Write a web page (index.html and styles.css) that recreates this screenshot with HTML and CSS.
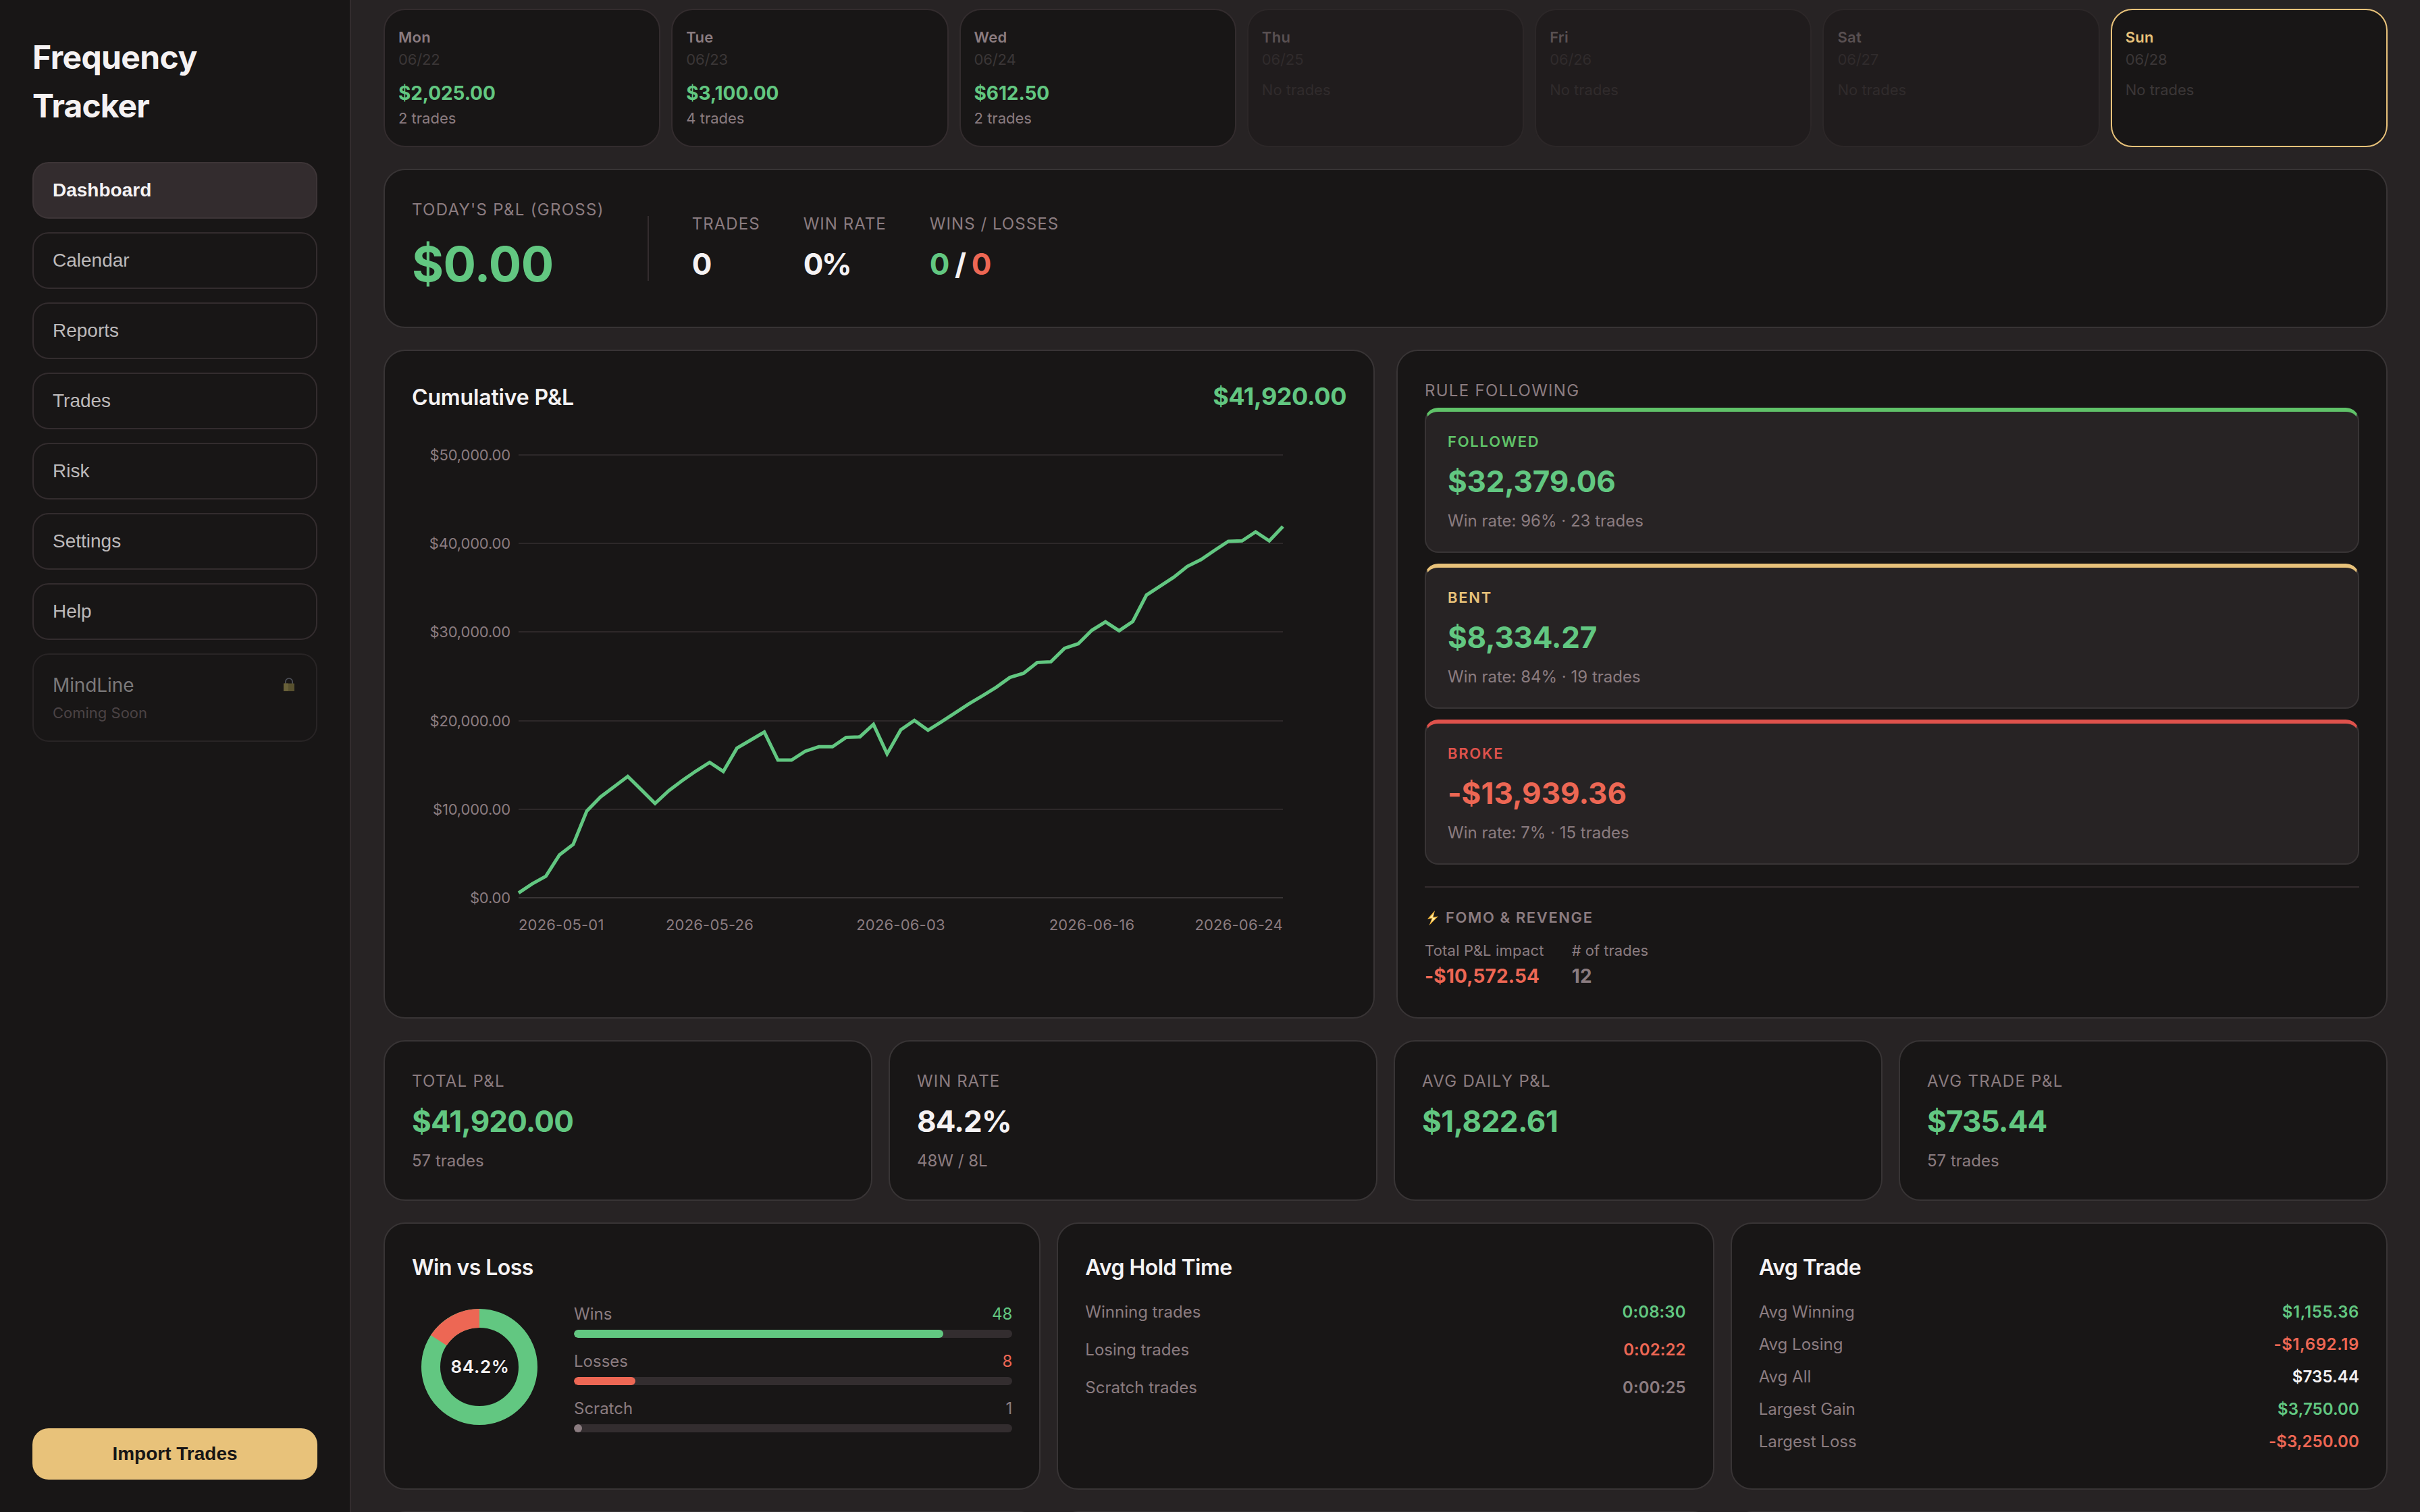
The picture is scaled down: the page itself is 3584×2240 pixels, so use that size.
FILE: index.html
```html
<!DOCTYPE html>
<html lang="en">
<head>
<meta charset="utf-8">
<title>Frequency Tracker</title>
<link rel="stylesheet" href="styles.css">
</head>
<body>
<div class="app">
  <aside class="sidebar">
    <h1 class="brand">Frequency <span class="brand-second">Tracker</span></h1>
    <nav class="nav">
      <a class="nav-item active">Dashboard</a>
      <a class="nav-item">Calendar</a>
      <a class="nav-item">Reports</a>
      <a class="nav-item">Trades</a>
      <a class="nav-item">Risk</a>
      <a class="nav-item">Settings</a>
      <a class="nav-item">Help</a>
      <div class="nav-locked">
        <div class="locked-row">
          <span class="locked-name">MindLine</span>
          <svg class="lock" viewBox="0 0 24 24"><path d="M6.8 10.4V7.2a5.2 5.2 0 0 1 10.4 0v3.2" fill="none" stroke="#50535c" stroke-width="1.7"/><rect x="4" y="9.4" width="16" height="11.6" rx=".6" fill="#58512f"/><rect x="4" y="9.4" width="7" height="11.6" rx=".6" fill="#686039"/></svg>
        </div>
        <div class="locked-note">Coming Soon</div>
      </div>
    </nav>
    <button class="import">Import Trades</button>
  </aside>

  <main class="main">
    <section class="week">
      <div class="day"><div class="day-name">Mon</div><div class="day-date">06/22</div><div class="day-pnl">$2,025.00</div><div class="day-count">2 trades</div></div>
      <div class="day"><div class="day-name">Tue</div><div class="day-date">06/23</div><div class="day-pnl">$3,100.00</div><div class="day-count">4 trades</div></div>
      <div class="day"><div class="day-name">Wed</div><div class="day-date">06/24</div><div class="day-pnl">$612.50</div><div class="day-count">2 trades</div></div>
      <div class="day idle"><div class="day-name">Thu</div><div class="day-date">06/25</div><div class="day-none">No trades</div></div>
      <div class="day idle"><div class="day-name">Fri</div><div class="day-date">06/26</div><div class="day-none">No trades</div></div>
      <div class="day idle"><div class="day-name">Sat</div><div class="day-date">06/27</div><div class="day-none">No trades</div></div>
      <div class="day today"><div class="day-name">Sun</div><div class="day-date">06/28</div><div class="day-none">No trades</div></div>
    </section>

    <section class="card summary">
      <div class="summary-main">
        <div class="label">TODAY'S P&amp;L (GROSS)</div>
        <div class="summary-pnl">$0.00</div>
      </div>
      <div class="divider"></div>
      <div class="summary-stat"><div class="label tight">TRADES</div><div class="value white">0</div></div>
      <div class="summary-stat"><div class="label tight">WIN RATE</div><div class="value white percent">0%</div></div>
      <div class="summary-stat"><div class="label tight">WINS / LOSSES</div><div class="value white ratio"><span class="green">0</span> / <span class="red">0</span></div></div>
    </section>

    <section class="halves">
      <div class="card">
        <div class="chart-head"><h2 class="card-title wide">Cumulative P&amp;L</h2><span class="chart-total">$41,920.00</span></div>
        <svg class="chart" viewBox="0 0 1384 853">
          <g class="grid">
            <path d="M158 60H1290M158 191H1290M158 322H1290M158 454H1290M158 585H1290"/>
            <path class="axis" d="M158 716H1290"/>
          </g>
          <g class="tick tick-y">
            <text x="146" y="68">$50,000.00</text>
            <text x="146" y="199">$40,000.00</text>
            <text x="146" y="330">$30,000.00</text>
            <text x="146" y="462">$20,000.00</text>
            <text x="146" y="593">$10,000.00</text>
            <text x="146" y="724">$0.00</text>
          </g>
          <g class="tick tick-x">
            <text class="first" x="158" y="764">2026-05-01</text>
            <text x="441" y="764">2026-05-26</text>
            <text x="724" y="764">2026-06-03</text>
            <text x="1007" y="764">2026-06-16</text>
            <text class="last" x="1290" y="764">2026-06-24</text>
          </g>
          <polyline class="line" points=""/>
        </svg>
      </div>

      <div class="card">
        <div class="label">RULE FOLLOWING</div>
        <div class="rules">
          <div class="rule followed"><div class="rule-name">FOLLOWED</div><div class="value rule-value green">$32,379.06</div><div class="sub">Win rate: 96% · 23 trades</div></div>
          <div class="rule bent"><div class="rule-name">BENT</div><div class="value rule-value green">$8,334.27</div><div class="sub">Win rate: 84% · 19 trades</div></div>
          <div class="rule broke"><div class="rule-name">BROKE</div><div class="value rule-value red">-$13,939.36</div><div class="sub">Win rate: 7% · 15 trades</div></div>
        </div>
        <div class="fomo">
          <div class="fomo-title"><svg class="bolt" viewBox="0 0 24 24"><path d="M15 1 4 13.6l6.6-1.2L6.6 23 20 9.6l-7.4 1.2z" fill="#f5b73c"/><path d="M13.4 5 7.4 12l5-.8-3 7.4 6.8-7.2-5.4.8z" fill="#fff3b0"/></svg>FOMO &amp; REVENGE</div>
          <div class="fomo-stats">
            <div><div class="fomo-label impact">Total P&amp;L impact</div><div class="fomo-value red">-$10,572.54</div></div>
            <div><div class="fomo-label"># of trades</div><div class="fomo-value">12</div></div>
          </div>
        </div>
      </div>
    </section>

    <section class="quarters">
      <div class="card"><div class="label">TOTAL P&amp;L</div><div class="value green">$41,920.00</div><div class="sub">57 trades</div></div>
      <div class="card"><div class="label tight">WIN RATE</div><div class="value white">84.2%</div><div class="sub">48W / 8L</div></div>
      <div class="card"><div class="label">AVG DAILY P&amp;L</div><div class="value green daily">$1,822.61</div></div>
      <div class="card"><div class="label">AVG TRADE P&amp;L</div><div class="value green">$735.44</div><div class="sub">57 trades</div></div>
    </section>

    <section class="thirds">
      <div class="card">
        <h2 class="card-title">Win vs Loss</h2>
        <div class="winloss">
          <svg class="donut" viewBox="0 0 200 200">
            <circle class="donut-win" cx="100" cy="100" r="72"/>
            <circle class="donut-loss" cx="100" cy="100" r="72" pathLength="100" stroke-dasharray="15.8 84.2" stroke-dashoffset="-84.2" transform="rotate(-90 100 100)"/>
            <text class="donut-text" x="101" y="109">84.2%</text>
          </svg>
          <div class="bars">
            <div><div class="bar-head"><span>Wins</span><span class="green">48</span></div><div class="track"><div class="fill fill-win" style="width:84.2%"></div></div></div>
            <div><div class="bar-head"><span>Losses</span><span class="red">8</span></div><div class="track"><div class="fill fill-loss" style="width:14%"></div></div></div>
            <div><div class="bar-head"><span>Scratch</span><span>1</span></div><div class="track"><div class="fill fill-scratch" style="width:1.8%"></div></div></div>
          </div>
        </div>
      </div>
      <div class="card">
        <h2 class="card-title">Avg Hold Time</h2>
        <div class="rows loose">
          <div class="row"><span>Winning trades</span><b class="green">0:08:30</b></div>
          <div class="row"><span>Losing trades</span><b class="red">0:02:22</b></div>
          <div class="row"><span>Scratch trades</span><b>0:00:25</b></div>
        </div>
      </div>
      <div class="card">
        <h2 class="card-title">Avg Trade</h2>
        <div class="rows">
          <div class="row"><span>Avg Winning</span><b class="green ones">$1,155.36</b></div>
          <div class="row"><span>Avg Losing</span><b class="red ones">-$1,692.19</b></div>
          <div class="row"><span>Avg All</span><b class="white">$735.44</b></div>
          <div class="row"><span>Largest Gain</span><b class="green">$3,750.00</b></div>
          <div class="row"><span>Largest Loss</span><b class="red">-$3,250.00</b></div>
        </div>
      </div>
    </section>

    <section class="thirds">
      <div class="card"></div>
      <div class="card"></div>
      <div class="card"></div>
    </section>
  </main>
</div>
<script src="chart.js"></script>
</body>
</html>
```
FILE: chart.js
```js
// Cumulative P&L after each trade, in dollars.
const equity = [
  550, 1570, 2430, 4850, 6020, 9800, 11380, 12540, 13700, 12190, 10650, 12090, 13250, 14310, 15280,
  14260, 16890, 17800, 18710, 15540, 15540, 16550, 17050, 17050, 18110, 18160, 19570, 16240, 18960,
  20030, 18920, 19880, 20890, 21900, 22810, 23770, 24880, 25340, 26560, 26650, 28170, 28680, 30200,
  31150, 30150, 31200, 34180, 35190, 36200, 37420, 38180, 39240, 40250, 40300, 41310, 40300, 41920
];
const left = 158, right = 1290, base = 716, top50k = 60;
document.querySelector('.line').setAttribute('points', equity.map((v, i) => {
  const x = left + (right - left) * i / (equity.length - 1);
  const y = base - (base - top50k) * v / 50000;
  return x.toFixed(1) + ',' + y.toFixed(1);
}).join(' '));
```
FILE: styles.css
```css
:root {
  --bg: #272324;
  --panel: #181616;
  --line: #383435;
  --line-soft: #332c2e;
  --muted: #8b7c80;
  --faint: #3b3637;
  --white: #f5f2f3;
  --green: #62c781;
  --red: #ed6754;
  --gold: #e8c27a;
}
* { box-sizing: border-box; }
body {
  margin: 0;
  background: var(--bg);
  color: var(--muted);
  font-family: Inter, "Noto Sans", sans-serif;
  font-size: 24px;
  line-height: 1.5;
}
h1, h2 { margin: 0; }
.app { display: flex; height: 2240px; overflow: hidden; }
.green { color: var(--green); }
.red { color: var(--red); }
.white { color: var(--white); }

.sidebar {
  width: 520px;
  flex: none;
  display: flex;
  flex-direction: column;
  padding: 48px;
  background: var(--panel);
  border-right: 2px solid var(--line-soft);
}
.brand {
  margin-bottom: 48px;
  color: var(--white);
  font-size: 48px;
  font-weight: 700;
  line-height: 72px;
  letter-spacing: -0.6px;
}
.brand-second { display: block; letter-spacing: -0.9px; }
.nav { display: flex; flex-direction: column; gap: 20px; }
.nav-item {
  padding: 24px 28px;
  border: 2px solid var(--line-soft);
  border-radius: 24px;
  color: #bcb9ba;
  font: 28px/32px "Liberation Sans", Arial, sans-serif;
}
.nav-item.active { background: #332c2e; border-color: #3d3537; color: var(--white); font-weight: 700; }
.nav-locked {
  padding: 24px 28px;
  border: 2px solid #282425;
  border-radius: 24px;
}
.locked-row { display: flex; justify-content: space-between; align-items: center; }
.locked-name { color: #7b797a; font-size: 28px; letter-spacing: -0.1px; }
.lock { width: 24px; height: 24px; }
.locked-note { margin-top: 4px; color: #4b4345; font-size: 22px; letter-spacing: 0; }
.import {
  margin-top: auto;
  padding: 22px 0;
  border: 0;
  border-radius: 24px;
  background: var(--gold);
  color: #181616;
  font: 700 28px/32px "Liberation Sans", Arial, sans-serif;
}

.main {
  flex: 1;
  min-width: 0;
  display: flex;
  flex-direction: column;
  gap: 32px;
  padding: 13px 48px 0;
}
.main > * { flex: none; }
.card {
  min-width: 0;
  padding: 40px;
  background: var(--panel);
  border: 2px solid var(--line);
  border-radius: 32px;
}
.label { letter-spacing: 1.28px; }
.label.tight { letter-spacing: 1.05px; }
.value { margin-top: 8px; font-size: 44px; font-weight: 700; letter-spacing: -0.84px; }
.value.daily { letter-spacing: -0.55px; }
.sub { margin-top: 8px; }
.brand, .label, .value, .sub, .summary-pnl, .rows, .bar-head, .thirds .card-title { transform: translateY(1px); }

.week { display: grid; grid-template-columns: repeat(7, 1fr); gap: 16px; }
.day {
  height: 205px;
  padding: 24px 20px;
  background: var(--panel);
  border: 2px solid var(--line-soft);
  border-radius: 32px;
  font-size: 22px;
}
.day-name { font-weight: 600; letter-spacing: 0.3px; }
.day-date { color: var(--faint); letter-spacing: -0.14px; }
.day-pnl { margin-top: 12px; color: var(--green); font-size: 28px; font-weight: 700; letter-spacing: -0.1px; }
.day-none { margin-top: 12px; color: var(--faint); }
.idle { background: #201c1d; border-color: #2c2728; }
.idle .day-name { color: #595052; }
.idle .day-date, .idle .day-none { color: #302b2c; }
.today { border-color: var(--gold); }
.today .day-name { color: var(--gold); }

.summary { display: flex; align-items: center; gap: 64px; }
.summary-pnl { margin-top: 8px; color: var(--green); font-size: 72px; font-weight: 700; letter-spacing: -0.6px; }
.divider { width: 2px; height: 96px; background: var(--line-soft); }
.percent { letter-spacing: -2.4px; }
.ratio { letter-spacing: -1.42px; }

.halves { display: grid; grid-template-columns: repeat(2, 1fr); gap: 32px; height: 991px; }
.card-title { color: var(--white); font-size: 32px; font-weight: 600; letter-spacing: -0.55px; }
.card-title.wide { letter-spacing: -0.15px; }
.chart-head { display: flex; justify-content: space-between; align-items: baseline; height: 54px; }
.chart-total { color: var(--green); font-size: 36px; font-weight: 700; letter-spacing: -0.46px; }
.chart { display: block; width: 1384px; height: 853px; }
.grid path { fill: none; stroke: #2d2829; stroke-width: 2; }
.grid .axis { stroke: #383435; }
.tick text { fill: var(--muted); font-size: 22px; }
.tick-y text { text-anchor: end; letter-spacing: -0.18px; }
.tick-x text { text-anchor: middle; letter-spacing: 0.19px; }
.tick-x .first { text-anchor: start; }
.tick-x .last { text-anchor: end; }
.line { fill: none; stroke: var(--green); stroke-width: 5; }

.rules { display: flex; flex-direction: column; gap: 16px; margin-top: 8px; }
.rule {
  padding: 28px 32px;
  background: var(--bg);
  border: 2px solid var(--line);
  border-top-width: 6px;
  border-radius: 20px;
}
.rule-name { font-size: 22px; font-weight: 600; letter-spacing: 1.76px; }
.rule-value { letter-spacing: -0.25px; }
.followed { border-top-color: #60c269; }
.followed .rule-name { color: #60c269; }
.bent { border-top-color: var(--gold); }
.bent .rule-name { color: var(--gold); }
.broke { border-top-color: #df524c; }
.broke .rule-name { color: #df524c; }
.broke .rule-value { letter-spacing: 0.02px; }
.fomo { margin-top: 32px; padding-top: 28px; border-top: 2px solid var(--line-soft); }
.fomo-title { display: flex; align-items: center; font-size: 22px; font-weight: 600; letter-spacing: 1.6px; }
.bolt { width: 24px; height: 24px; margin-right: 7px; }
.fomo-stats { display: flex; gap: 41px; margin-top: 16px; }
.fomo-label { font-size: 22px; }
.fomo-label.impact { letter-spacing: 0.21px; }
.fomo-value { font-size: 28px; font-weight: 700; letter-spacing: 0.15px; }

.quarters { display: grid; grid-template-columns: repeat(4, 1fr); gap: 24px; height: 238px; }
.thirds { display: grid; grid-template-columns: repeat(3, 1fr); gap: 24px; height: 396px; }
.winloss { display: flex; align-items: center; gap: 40px; margin-top: 24px; }
.donut { width: 200px; height: 200px; flex: none; }
.donut circle { fill: none; stroke-width: 28; }
.donut-win { stroke: var(--green); }
.donut-loss { stroke: var(--red); }
.donut-text { fill: var(--white); font-size: 26px; font-weight: 600; letter-spacing: 0.7px; text-anchor: middle; }
.bars { flex: 1; display: flex; flex-direction: column; gap: 16px; }
.bar-head { display: flex; justify-content: space-between; margin-bottom: 6px; }
.track { height: 12px; border-radius: 6px; background: #332d2f; overflow: hidden; }
.fill { height: 12px; border-radius: 6px; }
.fill-win { background: var(--green); }
.fill-loss { background: var(--red); }
.fill-scratch { background: var(--muted); }
.rows { display: flex; flex-direction: column; gap: 12px; margin-top: 24px; }
.rows.loose { gap: 20px; }
.row { display: flex; justify-content: space-between; letter-spacing: 0; }
.row b { font-weight: 600; letter-spacing: 0.1px; }
.row .ones { letter-spacing: 0.6px; }
```
